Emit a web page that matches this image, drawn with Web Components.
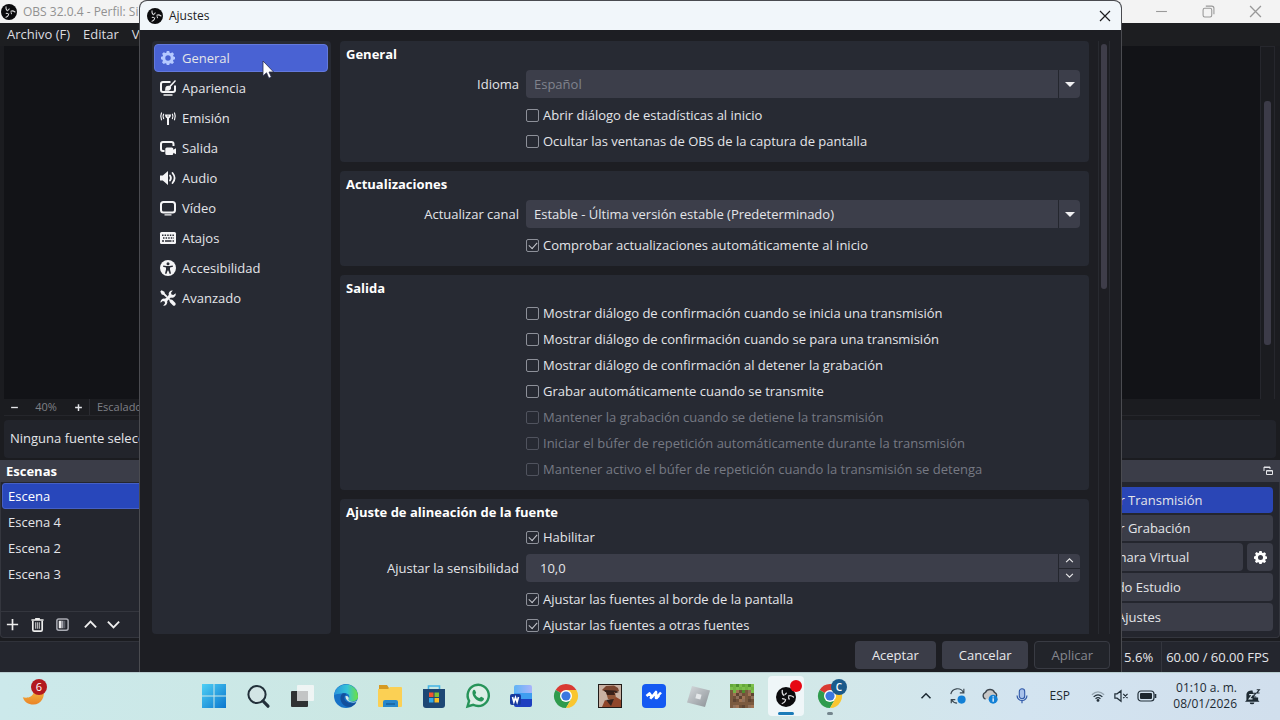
<!DOCTYPE html>
<html lang="es">
<head>
<meta charset="utf-8">
<title>OBS - Ajustes</title>
<style>
  html, body { height: 100%; margin: 0; }
  body { font: 13px/20px "Open Sans", "Noto Sans", sans-serif; color: #e4e5e9; overflow: hidden; }
</style>
</head>
<body>
<os-desktop>
  <obs-window></obs-window>
  <settings-dialog slot="dialog"></settings-dialog>
  <task-bar slot="taskbar"></task-bar>
</os-desktop>

<script>
const define = (name, html, setup) => {
  const template = document.createElement('template');
  template.innerHTML = '<style>:host,*{box-sizing:border-box}</style>' + html;
  customElements.define(name, class extends HTMLElement {
    constructor() {
      super();
      this.attachShadow({ mode: 'open' }).append(template.content.cloneNode(true));
    }
    connectedCallback() { if (setup) setup(this, this.shadowRoot); }
  });
};

const gear = '<path fill="currentColor" fill-rule="evenodd" d="M6.6 0h2.8l.5 2 1.2.5 1.8-1.1 2 2-1.1 1.8.5 1.2 1.7.4v2.6l-1.8.6-.5 1.2 1.1 1.8-2 1.9-1.8-1-1.2.5-.4 1.6H6.6l-.5-1.7-1.2-.4-1.8 1-1.9-1.9 1-1.8-.5-1.2L0 9.4V6.7l1.8-.5.5-1.2-1-1.8 1.9-1.9L5 2.4 6.1 2zM8 4.9a3.1 3.1 0 100 6.2 3.1 3.1 0 000-6.2z"/>';
const arm = 'M7.500 4.200C7 8 9 10.500 12.500 11.200C14.500 11.600 15.600 12.800 15.800 14.600';
const obs = `<circle cx="12" cy="12" r="12" fill="#0b0b0d"/><g fill="none" stroke="#dcdcde" stroke-width="1.600" stroke-linecap="round">
  <path d="${arm}"/><path d="${arm}" transform="rotate(120 12 12)"/><path d="${arm}" transform="rotate(240 12 12)"/></g>
  <circle cx="12" cy="12" r="2.600" fill="#0b0b0d"/>`;
const chrome = `<path d="M12 12L1.600 6a12 12 0 0120.800 0z" fill="#d93a32"/><path d="M12 12L1.600 6A12 12 0 0012 24l5.200-9z" fill="#2f9b4d"/><path d="M12 12l5.200 3L12 24A12 12 0 0022.400 6H12z" fill="#f9c62f"/><circle cx="12" cy="12" r="6" fill="#fff"/><circle cx="12" cy="12" r="4.600" fill="#3b77e0"/>`;

const dirt = (() => {
  const browns = ['#7b5a3f', '#a07454', '#5e4432', '#8f705a', '#6f5038'];
  const greens = ['#64a83a', '#7cc04c', '#4f8f2f', '#71b543'];
  let out = '';
  for (let y = 0; y < 8; y++) for (let x = 0; x < 8; x++) {
    const green = y < 2 || (y === 2 && x % 3 === 1);
    const set = green ? greens : browns;
    out += `<rect x="${x * 3}" y="${y * 3}" width="3" height="3" fill="${set[(x * 7 + y * 5 + x * y * 3) % set.length]}"/>`;
  }
  return out;
})();

const icons = {
  gear: ['0 0 16 16', gear],
  obs: ['0 0 24 24', obs],
  appearance: ['0 0 16 16', '<g fill="none" stroke="currentColor" stroke-width="2"><path d="M10.500 2H3a2 2 0 00-2 2v6a2 2 0 002 2h10a2 2 0 002-2V5.500"/><path d="M3.500 15h9" stroke-width="1.600"/></g><path fill="currentColor" d="M15 0l1 1-5.200 5.800c1 2.300-.8 4-3 4H4.600c.9-.7.500-1.700.8-3 .4-1.800 2.100-2.500 3.800-1.900z"/>'],
  stream: ['0 0 16 16', '<g fill="none" stroke="currentColor" stroke-width="1.200" stroke-linecap="round"><path d="M3.600 4.200c-.8 1.400-.8 3 0 4.400M12.400 4.200c.8 1.400.8 3 0 4.400M1.500 3c-1.100 2.300-1.100 4.500 0 6.800M14.500 3c1.100 2.300 1.100 4.500 0 6.800"/></g><path fill="currentColor" fill-rule="evenodd" d="M5 4.500h6c0 2-.8 3.200-2 3.800V15H7V8.300C5.800 7.700 5 6.500 5 4.500zM7 5.700l1 1 1-1z"/>'],
  output: ['0 0 16 16', '<path d="M4.500 11H3a2 2 0 01-2-2V4a2 2 0 012-2h8.500a2 2 0 012 2v2" fill="none" stroke="currentColor" stroke-width="2"/><path fill="currentColor" d="M6.800 7.500h5a1.500 1.500 0 011.500 1.500v.8L16 8.300v6l-2.700-1.500v.7a1.500 1.500 0 01-1.500 1.500h-5a1.500 1.500 0 01-1.500-1.500V9a1.500 1.500 0 011.500-1.500z"/>'],
  audio: ['0 0 16 16', '<path fill="currentColor" d="M0 5.500h2.800L8 1v14l-5.200-4.500H0z"/><path d="M10 5.500q1.800 2.500 0 5M12.500 3q4.200 5 0 10" fill="none" stroke="currentColor" stroke-width="1.800" stroke-linecap="round"/>'],
  video: ['0 0 16 16', '<rect x="1" y="2" width="14" height="10.500" rx="2.500" fill="none" stroke="currentColor" stroke-width="2"/><path d="M4.500 14.800h7" stroke="currentColor" stroke-width="1.200"/>'],
  keyboard: ['0 0 16 16', '<rect y="2" width="16" height="12" rx="1.500" fill="currentColor"/><g fill="none" stroke="#272a33" stroke-width="1.500"><path d="M2 5.200h12" stroke-dasharray="1.500 1.100"/><path d="M3 8h11" stroke-dasharray="1.500 1.100"/><path d="M2 11h2M5 11h6.500M12.500 11H14"/></g>'],
  access: ['0 0 16 16', '<circle cx="8" cy="8" r="8" fill="currentColor"/><circle cx="8" cy="3.700" r="1.500" fill="#272a33"/><path fill="#272a33" d="M3.300 5.500l3.200.6h3l3.200-.6.3 1.200-3 .9v2l1 4-1.300.4L8.300 10.500h-.6L6.300 14 5 13.600l1-4v-2l-3-.9z"/>'],
  tools: ['0 0 16 16', '<path fill="currentColor" d="M.3 1.500L1.600.2l2.800 1.500.5 1.900 2.700 2.700-1.300 1.300-2.700-2.700-1.900-.5z"/><path d="M11.300 11.300l2.700 2.700" stroke="currentColor" stroke-width="3.400" stroke-linecap="round"/><path d="M9.200 9.200l2 2" stroke="currentColor" stroke-width="1.600"/><path fill="currentColor" d="M15.700 3.200l-2.400 1.900-1.800-.5-.5-1.800L12.800.5a3.600 3.600 0 00-4 4.600L5.100 8.800A3.600 3.600 0 00.500 12.800l2.300-1.800 1.800.5.500 1.800-1.900 2.400a3.600 3.600 0 004-4.600l3.700-3.700a3.600 3.600 0 004.800-4.200z"/>'],
  plus: ['0 0 16 16', '<path d="M8 2v12M2 8h12" stroke="currentColor" stroke-width="1.800"/>'],
  minus: ['0 0 16 16', '<path d="M2 8h12" stroke="currentColor" stroke-width="2.400"/>'],
  boldplus: ['0 0 16 16', '<path d="M8 2v12M2 8h12" stroke="currentColor" stroke-width="2.600"/>'],
  trash: ['0 0 16 16', '<path d="M1.500 3.200h13M5.500 2h5" stroke="currentColor" stroke-width="1.800"/><path d="M3 4v9.500a1.500 1.500 0 001.500 1.500h7a1.500 1.500 0 001.500-1.500V4" fill="none" stroke="currentColor" stroke-width="1.800"/><path d="M6 5.500v7M8 5.500v7M10 5.500v7" stroke="currentColor" stroke-width="1.300" opacity=".7"/>'],
  filter: ['0 0 16 16', '<rect x="2" y="2" width="12" height="12" rx="2" fill="none" stroke="#a9abb3" stroke-width="1.600"/><path d="M4 4h3v8H4z" fill="#e8e8ea"/><path d="M7 4h2v8H7z" fill="#a0a2aa"/><path d="M9 4h2v8H9z" fill="#5c5e68"/>'],
  up: ['0 0 16 16', '<path d="M2 11l6-6 6 6" fill="none" stroke="currentColor" stroke-width="2"/>'],
  down: ['0 0 16 16', '<path d="M2 5l6 6 6-6" fill="none" stroke="currentColor" stroke-width="2"/>'],
  popout: ['0 0 10 10', '<path d="M1 5V1h6v2M3.500 4.500h6v4h-6z" fill="none" stroke="currentColor"/><path d="M1 1.500h6M4 5h5" stroke="currentColor"/>'],
  close: ['0 0 12 12', '<path d="M1 1l10 10M11 1L1 11" stroke="currentColor" stroke-width="1.200"/>'],
  minimize: ['0 0 12 12', '<path d="M1 6h10" stroke="currentColor"/>'],
  restore: ['0 0 12 12', '<rect x="1" y="3" width="8" height="8" rx="1.500" fill="none" stroke="currentColor"/><path d="M3.500 1H9a2 2 0 012 2v5.500" fill="none" stroke="currentColor"/>'],
  cursor: ['0 0 12 20', '<path d="M1 1v15l3.500-3.200 2.300 5.400 2.500-1.100L7 12h4.600z" fill="#fff" stroke="#2a2d50" stroke-width=".8"/>'],
  moon: ['0 0 24 24', '<defs><linearGradient id="m" x1="0" y1="0" x2="0" y2="1"><stop offset="0" stop-color="#f4b942"/><stop offset="1" stop-color="#ea8427"/></linearGradient></defs><path fill="url(#m)" d="M22.500 5c2 8-2.500 15.500-10 15.500C7 20.500 3.500 18 1.800 13.200c4 1.200 9.200.5 11.200-5.200C15 9 20 8 22.500 5z"/>'],
  windows: ['0 0 24 24', '<defs><linearGradient id="w" x2="1" y2="1"><stop stop-color="#4fd0f5"/><stop offset="1" stop-color="#0a76ce"/></linearGradient></defs><path fill="url(#w)" d="M0 0h11.500v11.500H0zM12.500 0H24v11.500H12.500zM0 12.500h11.500V24H0zM12.500 12.500H24V24H12.500z"/>'],
  search: ['0 0 24 24', '<circle cx="11" cy="10.500" r="8.600" fill="#d3e5e5" stroke="#22303a" stroke-width="2"/><path d="M17 17l5 5.200" stroke="#22303a" stroke-width="3.200" stroke-linecap="round"/>'],
  taskview: ['0 0 24 24', '<rect x="1" y="7" width="17" height="16" rx="1" fill="#2f3233"/><rect x="7" y="1" width="17" height="16" rx="1" fill="#f8f8f8" opacity=".8"/><path d="M7 7h11v10H7z" fill="#c3c5c5"/>'],
  edge: ['0 0 24 24', '<defs><linearGradient id="e" x2="1"><stop stop-color="#2a94dc"/><stop offset=".55" stop-color="#36c4d8"/><stop offset="1" stop-color="#6de23f"/></linearGradient></defs><circle cx="12" cy="12" r="12" fill="#1772c7"/><path fill="url(#e)" d="M.1 11A12 12 0 0124 12.500c0 4-3.800 5.500-7.500 4.900-2-.4-2.600-1.200-1.800-2.600 2.400-4.200-2.200-6.600-6.200-5.600C4.500 10 1.500 10 .1 11z"/><path fill="#124f9c" d="M8.500 9.500c-3.500 3-2.400 9.500 2.600 12.500 2 1.200 5 1.500 7 .3 2-1.200 3.300-2.400 4-4-3.500 1.500-7.500 1-10-1-2.200-2-2.800-5 .4-7.300-1.300-.8-2.700-.9-4-.5z"/><path fill="#d6e9e6" d="M11.500 12c-.2 4 3.500 6.500 8 6.400 2.500 0 4-1 4.300-2.400-2 2.200-5 2.200-7.300 1.400-2-.7-2.500-1.300-1.800-2.600.5-1.400-.7-3.300-3.200-2.800z"/>'],
  folder: ['0 0 24 24', '<path d="M1 1h8l2 3h12v6H1z" fill="#d69a22"/><path d="M1 5h9l2-2h11a1 1 0 011 1v18a1 1 0 01-1 1H1a1 1 0 01-1-1V5z" fill="#fbd054"/><path d="M5 23v-5a2 2 0 012-2h11a2 2 0 012 2v5z" fill="#2787cb"/><path d="M8 20h9" stroke="#18619e" stroke-width="1.500"/>'],
  store: ['0 0 24 24', '<path d="M6.500 7V2h11v5" fill="none" stroke="#45b4e5" stroke-width="1.600"/><path d="M1 5h22v16a3 3 0 01-3 3H4a3 3 0 01-3-3z" fill="#1d4774"/><path d="M7 8.500h4.500V13H7z" fill="#f1532f"/><path d="M12.500 8.500H17V13h-4.500z" fill="#83bf34"/><path d="M7 14h4.500v4.500H7z" fill="#33a9e6"/><path d="M12.500 14H17v4.500h-4.500z" fill="#fcbd24"/>'],
  whatsapp: ['0 0 24 24', '<path d="M1.500 22.500l1.600-5.700A10.600 10.600 0 1112.200 22a11 11 0 01-5-1.200z" fill="#dceee7" stroke="#27945a" stroke-width="2.400"/><path fill="#27945a" d="M7.200 6.200c.8-.8 1.500-.6 1.900.1l1 2.200c.2.700-.8 1.400-.8 1.900.9 1.900 2.200 3 4 3.700.7 0 1.300-1.500 2-1.300l2.300 1.200c1 .6-.1 2.700-1.400 3.200-2 .7-4.700-.4-6.700-2.300C7.300 12.800 5.300 8.600 7.200 6.200z"/>'],
  word: ['0 0 24 24', '<defs><linearGradient id="wd" x2="1"><stop stop-color="#5fb4f5"/><stop offset="1" stop-color="#a9b4fb"/></linearGradient></defs><path d="M4 9V3a2 2 0 012-2h14a2 2 0 012 2v6z" fill="url(#wd)"/><path d="M4 9h18v7H4z" fill="#3f9df0"/><path d="M4 15h18v6a2 2 0 01-2 2H6a2 2 0 01-2-2z" fill="#1e3fc0"/><rect y="10" width="11" height="11" rx="2" fill="#173a9e"/><path d="M2.500 13l1.400 5 1.600-4.500 1.600 4.500 1.400-5" fill="none" stroke="#fff" stroke-width="1.600"/>'],
  chrome: ['0 0 24 24', chrome],
  game: ['0 0 24 24', '<path d="M0 0h24v24H0z" fill="#211b18"/><path d="M1 1h22v22H1z" fill="#c8b1a3"/><path d="M4 6l4-4 8-.5L20 4l1 3-5 1-10-1z" fill="#7a4630"/><path d="M6 6l11 .5 4 1.500-3 1-11-1z" fill="#33201b"/><path d="M8 8h9l1 6-3 3-5-2z" fill="#8e5437"/><path d="M8 8h8l1 3-8 0z" fill="#3a211a"/><path d="M4 23l3-7 6 3 5-6 5 3v7z" fill="#90462a"/><path d="M8 16l5 6 3-7" fill="#35231e"/>'],
  wave: ['0 0 24 24', '<rect width="24" height="24" rx="4" fill="#1459f2"/><path d="M4.500 12l3-2.500L10 13l4-5v6l5-5.500" fill="none" stroke="#fff" stroke-width="2.600" stroke-linejoin="round"/><path d="M8 13l2 1.500M14 14.500l3-3" stroke="#fff" stroke-width="2.600"/>'],
  roblox: ['0 0 24 24', '<defs><linearGradient id="r" x2="1" y2="1"><stop stop-color="#d6dadd"/><stop offset="1" stop-color="#8c9297"/></linearGradient></defs><path fill="url(#r)" d="M6 2l18 4.500L19 23 1 18.500z"/><path d="M10.600 9.500l5 1.200-1.300 4.700-4.900-1.200z" fill="#e5e8ea"/>'],
  minecraft: ['0 0 24 24', dirt],
  sync: ['0 0 20 20', '<path d="M2 8a7.500 7.500 0 0114-2M16.500 2v4.500H12M9 18a7.500 7.500 0 01-6-3.500M2.500 18v-4H7" fill="none" stroke="#3b4851" stroke-width="1.300"/><circle cx="14" cy="14" r="4.500" fill="#1280d6"/>'],
  cloud: ['0 0 20 20', '<path d="M5 13.500a4 4 0 010-7.500 5.500 5.500 0 0110 0 4 4 0 012 5" fill="#c8c8c8" stroke="#3d464e" stroke-width="1.500"/><circle cx="13.500" cy="13.500" r="5" fill="#1280d6"/><path d="M13.500 12.500v4M13.500 10.300v1.300" stroke="#fff" stroke-width="1.400"/>'],
  mic: ['0 0 20 20', '<rect x="7" y="2" width="6" height="11" rx="3" fill="#a8c2ea" stroke="#2f58a8" stroke-width="1.200"/><path d="M4.500 9.500a5.500 5.500 0 0011 0M10 15v3" fill="none" stroke="#2f58a8" stroke-width="1.300"/>'],
  wifi: ['0 0 16 16', '<g fill="none" stroke="#23303a" stroke-width="1.400"><path d="M1 6.500q7-6.500 14 0" opacity=".35"/><path d="M3 9q5-4.500 10 0M5.200 11.200q2.800-2.500 5.600 0"/></g><circle cx="8" cy="13" r="1.600" fill="#23303a"/>'],
  muted: ['0 0 16 16', '<path d="M1 5.500h2.500L8 2v12l-4.500-3.500H1zM10.500 5.500l5 5M15.500 5.500l-5 5" fill="none" stroke="#23303a" stroke-width="1.400"/>'],
  battery: ['0 0 20 12', '<rect x="1" y="1" width="16" height="10" rx="3" fill="none" stroke="#23303a" stroke-width="1.200"/><rect x="3" y="3" width="12" height="6" rx="1" fill="#1d272e"/><path d="M18.500 4v4" stroke="#23303a" stroke-width="1.600"/>'],
  bell: ['0 0 16 16', '<path fill="#1e2a33" d="M1.500 12V6.500C1.500 3 4 1.500 8 1.500L9.500 9H14v3l1.500 1.500H0zM5 14.300h5a2.500 2 0 01-5 0z"/><path d="M4.500 6h3.500l-3.500 4.500h3.500" fill="none" stroke="#dbe9f1" stroke-width="1.200"/><path d="M8.500 4.500h3l-3 4h3.500M12.500.8h2.800l-2.800 3.500h3" fill="none" stroke="#1e2a33" stroke-width="1.200"/>']
};

define('ui-icon', `<style>:host{display:inline-block;flex:none;width:16px;height:16px}svg{display:block;width:100%;height:100%;overflow:visible}</style><svg aria-hidden="true"></svg>`, (el, root) => {
  const [box, art] = icons[el.getAttribute('name')];
  const svg = root.querySelector('svg');
  svg.setAttribute('viewBox', box);
  svg.innerHTML = art;
});

define('os-desktop', `<style>
  :host{display:flex;flex-direction:column;position:relative;height:100vh;overflow:hidden}
  main{flex:1;min-height:0;display:flex}
  ::slotted(obs-window){flex:1}
  slot[name=dialog]::slotted(*){position:absolute;left:139px;right:158px;top:0;bottom:48px}
</style><main><slot></slot></main><slot name="taskbar"></slot><slot name="dialog"></slot>`);

define('title-bar', `<style>
  :host{display:flex;align-items:center;gap:6px;font-size:12px;line-height:16px;flex:none}
  .text{flex:1;min-width:0;white-space:nowrap}
</style><ui-icon name="obs"></ui-icon><span class="text"><slot></slot></span><slot name="controls"></slot>`);

define('obs-window', `<style>
  :host{display:flex;flex-direction:column;min-width:0;background:#1b1c20}
  title-bar{height:23px;padding:0 18px 0 1px;background:#f3f3f3;color:#919191}
  .win{display:flex;gap:34px}
  .win button{border:0;background:none;padding:0;color:#999;display:flex}
  .win ui-icon{width:13px;height:13px}
  nav{height:23px;display:flex;gap:13px;padding:1px 7px;background:#1d1e21}
  nav a{color:#dcdde0;text-decoration:none}
  .preview{flex:1;min-height:0;display:flex;padding-left:4px}
  .canvas{flex:1;background:#121317}
  .vscroll{width:15px;border:1px solid #26272d;border-width:1px 1px 0;margin-right:5px;padding:54px 3px 54px}
  .vscroll i{display:block;height:100%;background:#3c3b48;border-radius:3px}
  .zoom{height:17px;margin:0 20px 0 4px;display:flex;align-items:center;font-size:11px;line-height:16px;color:#7f8086;border-bottom:1px solid #25262b}
  .zoom button{border:0;background:none;color:#e4e5e9;width:20px;padding:0 5px;display:flex;justify-content:center}
  .zoom ui-icon{width:9px;height:9px}
  .zoom output{width:44px;text-align:center}
  .zoom .scale{border-left:1px solid #2a2b31;padding-left:7px;margin-left:1px}
  .context{height:38px;margin:4px 4px 2px;padding:8px 6px;border-radius:4px;background:#22242b}
  .docks{height:178px;display:flex;justify-content:space-between;gap:4px;flex:none}
  .docks section{background:#24262e;border:1px solid #34363e;border-top:0;border-radius:0 0 4px 4px;display:flex;flex-direction:column}
  .scenes{width:300px}
  .controls{width:280px}
  h2{margin:0 -1px;height:22px;padding:1px 7px 1px 6px;background:#3b3d48;font-size:13px;line-height:20px;color:#fff;display:flex;align-items:center;justify-content:space-between;flex:none}
  h2 ui-icon{width:10px;height:10px;color:#e4e5e9}
  ul{list-style:none;margin:1px 1px 0;padding:0;flex:1}
  li{height:26px;padding:3px 6px;border-radius:3px}
  li.on{background:#2847bb;border:1px solid #4560c6;padding:2px 5px;color:#fff}
  .tools{height:26px;border-top:1px solid #34363e;display:flex;align-items:center;padding-left:4px;gap:10px}
  .tools button{border:0;background:none;padding:0;color:#eee;display:flex}
  .tools ui-icon{width:15px;height:15px}
  .tools .move{display:flex;gap:8px;padding-left:3px}
  .stack{display:flex;flex-direction:column;gap:2px;padding:5px 6px 4px 4px}
  .row{display:flex;gap:4px}
  .row button{flex:1;height:28px;border:0;padding:0;border-radius:4px;background:#3b3d48;color:#e4e5e9;font:inherit;display:flex;align-items:center;justify-content:center}
  .row.low button{height:26px}
  .row button.on{background:#2a46b6}
  .row button.cog{flex:none;width:26px;color:#fff}
  .cog ui-icon{width:13px;height:13px}
  .status{height:31px;margin-top:3px;border-top:1px solid #30323a;background:#24262e;display:flex;justify-content:flex-end;align-items:center;padding-right:11px;flex:none}
  .status span+span{border-left:1px solid #34363e;margin-left:8px;padding-left:4px}
  .status span{line-height:30px}
</style>
<title-bar>OBS 32.0.4 - Perfil: Sin<div class="win" slot="controls"><button aria-label="Minimizar"><ui-icon name="minimize"></ui-icon></button><button aria-label="Restaurar"><ui-icon name="restore"></ui-icon></button><button aria-label="Cerrar"><ui-icon name="close"></ui-icon></button></div></title-bar>
<nav><a href="#archivo">Archivo (F)</a><a href="#editar">Editar</a><a href="#ver">Ver</a></nav>
<div class="preview"><div class="canvas"></div><div class="vscroll"><i></i></div></div>
<div class="zoom"><button aria-label="Alejar"><ui-icon name="minus"></ui-icon></button><output>40%</output><button aria-label="Acercar"><ui-icon name="boldplus"></ui-icon></button><span class="scale">Escalado</span></div>
<div class="context">Ninguna fuente seleccionada</div>
<div class="docks">
  <section class="scenes"><h2>Escenas</h2>
    <ul><li class="on">Escena</li><li>Escena 4</li><li>Escena 2</li><li>Escena 3</li></ul>
    <div class="tools"><button aria-label="Agregar"><ui-icon name="plus"></ui-icon></button><button aria-label="Eliminar"><ui-icon name="trash"></ui-icon></button><button aria-label="Filtros"><ui-icon name="filter"></ui-icon></button><span class="move"><button aria-label="Subir"><ui-icon name="up"></ui-icon></button><button aria-label="Bajar"><ui-icon name="down"></ui-icon></button></span></div>
  </section>
  <section class="controls"><h2><span></span><ui-icon name="popout"></ui-icon></h2>
    <div class="stack">
      <div class="row low"><button class="on">Detener Transmisión</button></div>
      <div class="row low"><button>Iniciar Grabación</button></div>
      <div class="row"><button>Iniciar Cámara Virtual</button><button class="cog" aria-label="Configurar cámara"><ui-icon name="gear"></ui-icon></button></div>
      <div class="row"><button>Modo Estudio</button></div>
      <div class="row"><button>Ajustes</button></div>
    </div>
  </section>
</div>
<div class="status"><span>CPU: 5.6%</span><span>60.00 / 60.00 FPS</span></div>`);

define('settings-group', `<style>
  :host{display:block;background:#272a33;border-radius:4px;padding:2px 9px 8px 0;flex:none}
  h3{margin:0;padding:0 6px 1px;font-size:13px;line-height:22px;color:#fff}
</style><h3></h3><slot></slot>`, (el, root) => { root.querySelector('h3').textContent = el.getAttribute('heading'); });

define('check-row', `<style>
  :host{display:flex;align-items:center;height:26px;padding-left:186px}
  label{display:flex;align-items:center;gap:4px}
  input{appearance:none;margin:0;width:13px;height:13px;border:1px solid #8d9099;border-radius:2px;position:relative}
  input:checked::after{content:"";position:absolute;left:2px;top:2px;width:7px;height:4px;border:solid #c5c7cd;border-width:0 0 1px 1px;transform:rotate(-48deg)}
  :host([disabled]) label{color:#767983}
  :host([disabled]) input{border-color:#50535e}
</style><label><input type="checkbox"><span><slot></slot></span></label>`, (el, root) => {
  const box = root.querySelector('input');
  box.checked = el.hasAttribute('checked');
  box.disabled = el.hasAttribute('disabled');
});

const fieldCss = `
  :host{display:grid;grid-template-columns:179px 1fr;column-gap:7px;align-items:center;margin:4px 0}
  label{text-align:right}
  .box{position:relative;display:flex;height:28px;background:#3c3e4a;border-radius:4px;overflow:hidden}
  select,input{appearance:none;flex:1;min-width:0;border:0;outline:0;margin:0;background:none;color:inherit;font:inherit;padding:0 8px;opacity:1}
  .side{width:22px;border-left:1px solid #24262e;display:flex;flex-direction:column;align-items:center;justify-content:center}`;

define('select-row', `<style>${fieldCss}
  .side{position:absolute;right:0;top:0;bottom:0;pointer-events:none}
  .side i{border:5px solid transparent;border-top-color:#f0f0f2;border-bottom:0}
  select:disabled{color:#80838d}
</style><label for="f"></label><div class="box"><select id="f"></select><span class="side"><i></i></span></div>`, (el, root) => {
  root.querySelector('label').textContent = el.getAttribute('label');
  const select = root.querySelector('select');
  select.replaceChildren(new Option(el.getAttribute('value')));
  select.disabled = el.hasAttribute('disabled');
});

define('spin-row', `<style>${fieldCss}
  input{padding:0 14px}
  .side button{flex:1;width:100%;border:0;padding:0;background:none;color:#e8e8ea;display:flex;align-items:center;justify-content:center}
  .side button+button{border-top:1px solid #24262e}
  .side ui-icon{width:9px;height:9px}
</style><label for="f"></label><div class="box"><input id="f" type="text" inputmode="decimal"><span class="side"><button aria-label="Aumentar"><ui-icon name="up"></ui-icon></button><button aria-label="Disminuir"><ui-icon name="down"></ui-icon></button></span></div>`, (el, root) => {
  root.querySelector('label').textContent = el.getAttribute('label');
  root.querySelector('input').value = el.getAttribute('value');
});

define('settings-nav', `<style>
  :host{display:flex;flex-direction:column;gap:2px;width:179px;padding:3px 3px 0 2px;background:#272a33;border-radius:4px;flex:none}
  button{display:flex;align-items:center;gap:6px;width:100%;height:28px;padding:0 5px;border:1px solid transparent;border-radius:4px;background:none;color:inherit;font:inherit;text-align:left}
  button.on{background:#4962d3;border-color:#6379dc}
  ui-icon{color:#f4f4f6}
  .on ui-icon{color:#b5c9ff;width:14px;height:14px;margin:1px}
</style>
<button class="on"><ui-icon name="gear"></ui-icon>General</button>
<button><ui-icon name="appearance"></ui-icon>Apariencia</button>
<button><ui-icon name="stream"></ui-icon>Emisión</button>
<button><ui-icon name="output"></ui-icon>Salida</button>
<button><ui-icon name="audio"></ui-icon>Audio</button>
<button><ui-icon name="video"></ui-icon>Vídeo</button>
<button><ui-icon name="keyboard"></ui-icon>Atajos</button>
<button><ui-icon name="access"></ui-icon>Accesibilidad</button>
<button><ui-icon name="tools"></ui-icon>Avanzado</button>`);

define('settings-dialog', `<style>
  :host{display:flex;flex-direction:column;background:#1d1e23;border:1px solid #4a4b50;border-bottom:0;border-radius:8px 8px 0 0;overflow:hidden}
  title-bar{height:29px;padding:0 10px 0 7px;background:#f1f6fa;color:#1d1d1f}
  .close{border:0;background:none;padding:0;color:#1d1d1f;display:flex}
  .close ui-icon{width:12px;height:12px}
  .body{flex:1;min-height:0;display:flex;padding:11px 11px 0 12px}
  .groups{flex:1;min-width:0;margin-left:9px;display:flex;flex-direction:column;gap:9px;overflow:hidden}
  .scroll{width:12px;margin-left:9px;border:1px solid #282a30;border-width:0 1px;padding:3px 2px;display:grid;grid-template-rows:5fr 7fr}
  .scroll i{border-radius:3px;background:#3e3d49}
  footer{height:38px;padding:7px 11px 3px;display:flex;justify-content:flex-end;gap:6px;flex:none}
  footer button{border:0;border-radius:4px;padding:0 17px;height:28px;background:#3b3d48;color:#e8e9ec;font:inherit}
  footer button:disabled{background:#22242a;border:1px solid #393b43;padding:0 16px;color:#85878f}
  .pointer{position:absolute;left:122px;top:59px;width:12px;height:20px}
</style>
<title-bar>Ajustes<button class="close" slot="controls" aria-label="Cerrar"><ui-icon name="close"></ui-icon></button></title-bar>
<div class="body">
  <settings-nav></settings-nav>
  <div class="groups">
    <settings-group heading="General">
      <select-row label="Idioma" value="Español" disabled></select-row>
      <check-row>Abrir diálogo de estadísticas al inicio</check-row>
      <check-row>Ocultar las ventanas de OBS de la captura de pantalla</check-row>
    </settings-group>
    <settings-group heading="Actualizaciones">
      <select-row label="Actualizar canal" value="Estable - Última versión estable (Predeterminado)"></select-row>
      <check-row checked>Comprobar actualizaciones automáticamente al inicio</check-row>
    </settings-group>
    <settings-group heading="Salida">
      <check-row>Mostrar diálogo de confirmación cuando se inicia una transmisión</check-row>
      <check-row>Mostrar diálogo de confirmación cuando se para una transmisión</check-row>
      <check-row>Mostrar diálogo de confirmación al detener la grabación</check-row>
      <check-row>Grabar automáticamente cuando se transmite</check-row>
      <check-row disabled>Mantener la grabación cuando se detiene la transmisión</check-row>
      <check-row disabled>Iniciar el búfer de repetición automáticamente durante la transmisión</check-row>
      <check-row disabled>Mantener activo el búfer de repetición cuando la transmisión se detenga</check-row>
    </settings-group>
    <settings-group heading="Ajuste de alineación de la fuente">
      <check-row checked>Habilitar</check-row>
      <spin-row label="Ajustar la sensibilidad" value="10,0"></spin-row>
      <check-row checked>Ajustar las fuentes al borde de la pantalla</check-row>
      <check-row checked>Ajustar las fuentes a otras fuentes</check-row>
    </settings-group>
  </div>
  <div class="scroll"><i></i></div>
</div>
<footer><button>Aceptar</button><button>Cancelar</button><button disabled>Aplicar</button></footer>
<ui-icon class="pointer" name="cursor"></ui-icon>`);

define('task-bar', `<style>
  :host{display:flex;align-items:center;flex:none;height:48px;box-shadow:inset 0 1px #b8cdd0;color:#1d2a33;background:linear-gradient(90deg,#cce9eb,#cbe7e2 35%,#d2e9e7 60%,#d3e4f0 80%,#d1dfed);font-size:12px;line-height:16px}
  .widgets{flex:none;width:192px;padding:0 21px}
  .widgets button{position:relative;border:0;background:none;padding:0;display:block;font:inherit}
  .widgets ui-icon{width:24px;height:24px;display:block}
  .badge{position:absolute;left:10px;top:-5px;width:16px;height:16px;border-radius:8px;background:#b3191f;color:#fff;font-size:11px;text-align:center}
  .apps{display:flex;flex:1;min-width:0}
  .app{position:relative;flex:none;width:36px;height:40px;margin:0 4px;border:0;border-radius:4px;padding:8px 6px;background:none;font:inherit}
  .app ui-icon{width:24px;height:24px;display:block}
  .app.on{background:#eff6f8}
  .app.on ui-icon{width:20px;height:20px;margin:3px 2px}
  .app i{position:absolute;left:15px;bottom:1px;width:6px;height:3px;border-radius:2px;background:#74858d}
  .app.on i{left:10px;width:16px;background:#1a7bb8}
  .dot,.user{position:absolute;border-radius:50%}
  .dot{left:22px;top:4px;width:12px;height:12px;background:#e60713}
  .user{left:19px;top:3px;width:16px;height:16px;background:#1a5a8b;color:#fff;font-size:10px;line-height:16px;text-align:center;font-weight:600}
  .tray{display:flex;align-items:center;flex:none;padding-right:20px}
  .tray ui-icon{width:18px;height:18px;margin-right:14px}
  .tray ui-icon.chev{width:12px;height:12px;margin-right:17px}
  .tray .lang{margin:0 21px 0 5px}
  .tray ui-icon.s{width:14px;height:14px;margin-right:9px}
  .tray ui-icon.bat{width:20px;height:12px;margin-right:16px}
  .tray ui-icon.end{width:15px;height:15px;margin:0 0 0 8px}
  time{text-align:right;width:64px;white-space:nowrap;display:flex;flex-direction:column;align-items:flex-end}
</style>
<div class="widgets"><button aria-label="Widgets"><ui-icon name="moon"></ui-icon><span class="badge">6</span></button></div>
<div class="apps">
  <button class="app" aria-label="Inicio"><ui-icon name="windows"></ui-icon></button>
  <button class="app" aria-label="Buscar"><ui-icon name="search"></ui-icon></button>
  <button class="app" aria-label="Vista de tareas"><ui-icon name="taskview"></ui-icon></button>
  <button class="app" aria-label="Edge"><ui-icon name="edge"></ui-icon></button>
  <button class="app" aria-label="Explorador"><ui-icon name="folder"></ui-icon></button>
  <button class="app" aria-label="Tienda"><ui-icon name="store"></ui-icon></button>
  <button class="app" aria-label="WhatsApp"><ui-icon name="whatsapp"></ui-icon></button>
  <button class="app" aria-label="Word"><ui-icon name="word"></ui-icon></button>
  <button class="app" aria-label="Chrome"><ui-icon name="chrome"></ui-icon></button>
  <button class="app" aria-label="Juego"><ui-icon name="game"></ui-icon></button>
  <button class="app" aria-label="Editor"><ui-icon name="wave"></ui-icon></button>
  <button class="app" aria-label="Roblox"><ui-icon name="roblox"></ui-icon></button>
  <button class="app" aria-label="Minecraft"><ui-icon name="minecraft"></ui-icon></button>
  <button class="app on" aria-label="OBS"><ui-icon name="obs"></ui-icon><span class="dot"></span><i></i></button>
  <button class="app" aria-label="Chrome, perfil C"><ui-icon name="chrome"></ui-icon><span class="user">C</span><i></i></button>
</div>
<div class="tray">
  <ui-icon class="chev" name="up"></ui-icon><ui-icon name="sync"></ui-icon><ui-icon name="cloud"></ui-icon><ui-icon name="mic"></ui-icon>
  <span class="lang">ESP</span><ui-icon class="s" name="wifi"></ui-icon><ui-icon class="s" name="muted"></ui-icon><ui-icon class="bat" name="battery"></ui-icon>
  <time datetime="2026-01-08T01:10"><span>01:10 a. m.</span><span>08/01/2026</span></time><ui-icon class="end" name="bell"></ui-icon>
</div>`);
</script>
</body>
</html>
